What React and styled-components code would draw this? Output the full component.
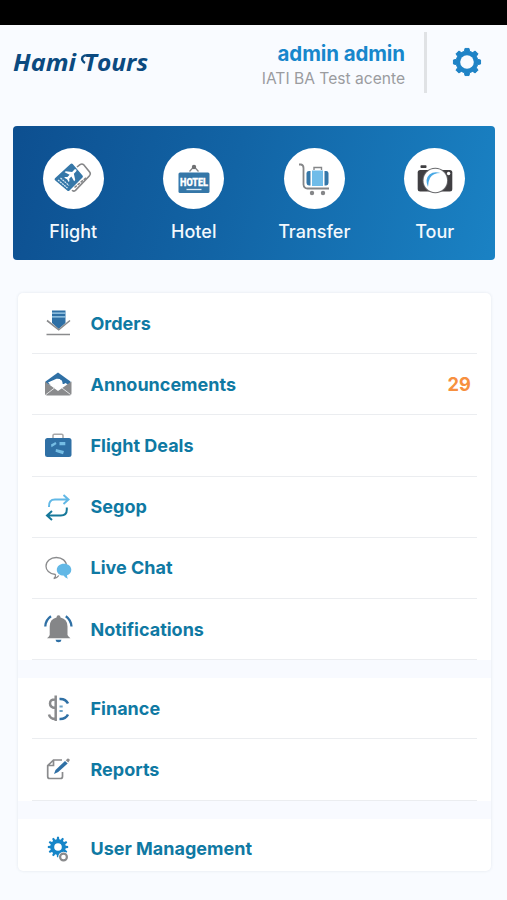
import React from "react";
import styled, { createGlobalStyle } from "styled-components";

const GlobalStyle = createGlobalStyle`
  * {
    box-sizing: border-box;
  }
  body {
    margin: 0;
    background: #f9fbff;
    font-family: Inter, "Liberation Sans", sans-serif;
  }
`;

const Screen = styled.div`
  height: 900px;
  overflow: hidden;
`;

const StatusBar = styled.div`
  height: 25px;
  background: #000;
`;

const Header = styled.header`
  display: flex;
  align-items: center;
  height: 75px;
  padding: 0 25px 0 12px;
`;

const Brand = styled.div`
  flex: 1;
  svg {
    display: block;
    overflow: visible;
  }
  text {
    fill: #0b4a80;
    font-family: "Open Sans", "Noto Sans", sans-serif;
    font-size: 23px;
    font-weight: 700;
    font-style: italic;
  }
`;

const Account = styled.div`
  height: 61px;
  padding: 8px 19px 0 0;
  border-right: 3px solid #e0e2e5;
  text-align: right;
  h1 {
    margin: 0;
    color: #1787cc;
    font-size: 20.5px;
    font-weight: 700;
    line-height: 27px;
    letter-spacing: -0.1px;
  }
  p {
    margin: 0;
    color: #9b9c9f;
    font-size: 15.6px;
    line-height: 23px;
  }
`;

const SettingsButton = styled.button`
  display: flex;
  margin: 0 0 2px 25px;
  padding: 0;
  border: 0;
  background: none;
`;

const Shortcuts = styled.nav`
  display: grid;
  grid-template-columns: repeat(4, 1fr);
  height: 134px;
  margin: 26px 12px 0 13px;
  padding-top: 22px;
  border-radius: 4px;
  background: linear-gradient(105deg, #0d4f90 0%, #1264a5 45%, #1a82c4 100%);
`;

const Shortcut = styled.div`
  display: flex;
  flex-direction: column;
  align-items: center;
  gap: 9px;
  color: #f2f8fd;
  font-size: 18px;
  font-weight: 500;
  line-height: 27px;
`;

const Circle = styled.div`
  display: flex;
  align-items: center;
  justify-content: center;
  width: 61px;
  height: 61px;
  border-radius: 50%;
  background: #fff;
`;

const Menu = styled.main`
  height: 578px;
  margin: 33px 16px 0 18px;
  overflow: hidden;
  border-radius: 5px;
  background: #fff;
  box-shadow: 0 0 3px rgba(60, 80, 110, 0.12);
`;

const Group = styled.section`
  padding: 0 14px;
  & + & {
    border-top: 18px solid #f8faff;
  }
`;

const Row = styled.div`
  display: flex;
  align-items: center;
  height: 61.2px;
  padding: 0 6px 0 11px;
  border-bottom: 1px solid #ebedf0;
  color: #0f79a3;
  font-size: 18px;
  font-weight: 700;
  svg {
    margin-right: 17.5px;
  }
`;

const Label = styled.span`
  flex: 1;
`;

const Count = styled.span`
  color: #f7903f;
  font-size: 18.3px;
`;

const BLUE = "#2f70a5";
const SKY = "#62b8e6";
const GRAY = "#8a8b8d";

// outline of a cog as one closed path
function cogPath(cx, cy, outer, inner, teeth) {
  const step = (Math.PI * 2) / teeth;
  const points = [];
  for (let i = 0; i < teeth; i++) {
    const a = i * step - Math.PI / 2;
    [[-0.3, inner], [-0.19, outer], [0.19, outer], [0.3, inner]].forEach(([t, r]) => {
      points.push(`${(cx + r * Math.cos(a + t * step)).toFixed(2)} ${(cy + r * Math.sin(a + t * step)).toFixed(2)}`);
    });
  }
  return `M${points.join("L")}Z`;
}

const Icon = ({ children }) => (
  <svg width="30" height="30" viewBox="0 0 30 30" fill="none">{children}</svg>
);

const Logo = () => (
  <svg width="138" height="28" viewBox="0 0 138 28" fill="none">
    <text x="1" y="22" textLength="63" lengthAdjust="spacingAndGlyphs">Hami</text>
    <text x="72" y="22" textLength="64" lengthAdjust="spacingAndGlyphs">Tours</text>
    <path d="M82 7Q73 5 70.500 8q-1.500 3.500 2.500 6" stroke="#0b4a80" strokeWidth="2.300" />
  </svg>
);

const SettingsIcon = () => (
  <svg width="30" height="30" viewBox="0 0 30 30">
    <path d={cogPath(15, 15, 13.7, 11, 8)} fill="#1f83c6" stroke="#1f83c6" strokeLinejoin="round" />
    <circle cx="15" cy="15" r="6.800" fill="#f9fbff" />
  </svg>
);

const FlightIcon = () => (
  <svg width="40" height="34" viewBox="0 0 40 34" fill="none">
    <path d="M24 5l3-2.400q2-1.300 3.500 0l6.500 7.900q1 1.800-.5 3.200L22.500 28.300q-2 1.500-3.500 0" stroke="#858688" strokeWidth="1.600" />
    <path d="M21.500 25.500l12-10" stroke="#858688" strokeWidth="1.600" strokeDasharray="3 1" />
    <path d="M17.500 2q1.200-.9 2.200 0l9.800 11.500q.9 1 0 2L16.500 28.500q-1.300 1-2.300 0L2 18.300q-1-1 0-2z" fill="#3577a8" />
    <g transform="translate(18.500 12.500) rotate(43)" fill="#fff">
      <path d="M-1.200-6Q0-8 1.200-6v3.800L6.500 1.500v1.600L1.200 1.500v3.200l1.800 1.500v1.200L0 6.600l-3 .8V6.200l1.800-1.500V1.500l-5.300 1.600V1.500l5.300-3.700z" />
    </g>
    <path d="M5 18l9.500 8M7.500 16l8.500 7.500" stroke="#d9e9f4" strokeWidth="1.200" strokeDasharray="2 .7" />
  </svg>
);

const HotelIcon = () => (
  <svg width="48" height="34" viewBox="-7 0 48 34" fill="none">
    <path d="M12.500 9.500L17 4.500l4.500 5" stroke="#858688" strokeWidth="1.300" />
    <circle cx="17" cy="5" r="2.200" fill="#6f7072" />
    <rect x="1.500" y="10.500" width="31" height="20.500" rx="1.500" fill="#3577a8" />
    <text x="17" y="24.300" textAnchor="middle" textLength="28" lengthAdjust="spacingAndGlyphs" fontFamily="Roboto, sans-serif" fontWeight="900" fontSize="11.500" fill="#fff" stroke="#fff" strokeWidth=".3">HOTEL</text>
    <path d="M9.500 27.500h15" stroke="#d9e9f4" strokeWidth="1.300" />
  </svg>
);

const TransferIcon = () => (
  <svg width="34" height="34" viewBox="0 0 34 34" fill="none">
    <path d="M2 2.500h2Q6.500 3 6.500 6v16.500q.3 3.800 4 4h21.500" stroke="#858688" strokeWidth="1.800" />
    <path d="M17 8V5.500h7.500V8" stroke="#858688" strokeWidth="1.400" />
    <path d="M13.500 9v14.500H12q-2.500-.2-2.500-2.500V11q.2-2 2.500-2zM27.500 9v14.500h1.700q2.300-.2 2.300-2.500V11q-.2-2-2.300-2z" fill="#3577a8" />
    <rect x="15" y="8.500" width="11" height="15.500" fill="#70bce9" />
    <circle cx="15" cy="31" r="2.200" fill="#858688" />
    <circle cx="26" cy="31" r="2.200" fill="#858688" />
  </svg>
);

const TourIcon = () => (
  <svg width="36" height="32" viewBox="0 0 36 32" fill="none">
    <rect x="3.500" y="2.200" width="6" height="2.800" rx=".7" fill="#403f42" />
    <rect x=".7" y="7" width="34.600" height="21.500" rx="2.500" fill="#403f42" />
    <circle cx="31.600" cy="10.500" r="1.700" fill="#fff" />
    <circle cx="18.300" cy="17.500" r="12.700" fill="#68696c" />
    <circle cx="18.300" cy="17.500" r="11.800" fill="#fff" />
    <path d="M11 24Q7.500 16 12.500 11.500 17 7.700 23.500 10q-7.500 0-10.500 5-2 4-2 9z" fill="#49a9e5" />
  </svg>
);

const OrdersIcon = () => (
  <Icon>
    <path d="M9 2.500h13.500V15l-6.800 6L9 15z" fill={BLUE} />
    <path d="M9 5.200h13.500M9 8.800h13.500" stroke="#a9d4ee" strokeWidth="1.200" />
    <path d="M4 12.500l11.700 9.300L27 12.500M3.500 26.500H27" stroke={GRAY} strokeWidth="1.600" />
  </Icon>
);

const AnnouncementsIcon = () => (
  <Icon>
    <path d="M2.500 12.500L15 3.500l12.500 9v3h-25z" fill={BLUE} />
    <path d="M5 13.500l8.500-3.800q6-.5 6.500 5.300l3-1 1.500 2-9 7z" fill="#fff" />
    <path d="M17 9.500q4 .5 3.500 5.500" stroke={BLUE} strokeWidth="1.600" />
    <path d="M2 12.500l13 9.500 13.500-9.500v12q0 2-2 2H4q-2 0-2-2z" fill={GRAY} />
    <path d="M3 25.500l8.500-6.500M27.500 25.500L19 19" stroke="#e2e3e4" />
  </Icon>
);

const DealsIcon = () => (
  <Icon>
    <path d="M10 8V5.500q0-1.300 1.300-1.300h7.400q1.300 0 1.300 1.300V8" stroke="#a8a8a9" strokeWidth="1.500" />
    <rect x="2" y="8" width="26.500" height="19" rx="2.500" fill={BLUE} />
    <path d="M8 14.500l4.500-2.500 1 2-5 3.200zM16.500 12h5.800v3.300h-5.800zM13 19l8 2-1 3.200-7.500-2.500z" fill="#75bde4" />
  </Icon>
);

const SegopIcon = () => (
  <Icon>
    <path d="M6 15q-.5-7.500 6-7.500h13M20.500 3l5 4.500-5 4.500" stroke={SKY} strokeWidth="2" />
    <path d="M23.800 15.500v2q0 6-6 6H4.500M9 19l-5 4.500L9 28" stroke="#16789a" strokeWidth="2" />
  </Icon>
);

const ChatIcon = () => (
  <Icon>
    <path d="M12.500 21.500C6 21 3 17 3 13.200 3 8 7.500 4.500 13.300 4.500S23.500 8 23.500 13M12.500 21.500q.5 2.500-1.700 4 3.500-.5 5-3" stroke={GRAY} strokeWidth="1.300" />
    <path d="M21 10.700c4.300 0 7.300 2.600 7.300 6 0 2.700-1.800 4.800-4.300 5.500q0 2 1 3.500-3-.7-4.500-3.100c-4-.1-6.700-2.600-6.700-5.900 0-3.400 3.100-6 7.200-6z" fill={SKY} />
  </Icon>
);

const NotificationsIcon = () => (
  <Icon>
    <path d="M2.300 12.500Q2.500 6 8 2.300M28.500 12.500Q28 6 22.800 2.300" stroke={BLUE} strokeWidth="2.300" />
    <path d="M13.500 3.500q0-2.200 2-2.200t2 2.200q7 1.500 7 9V21q1 2 3 3.300H4q2-1.300 2.700-3.300v-8.500q0-7.500 6.800-9z" fill="#858688" />
    <path d="M12.500 25.700h6q-.3 2.500-3 2.500t-3-2.500z" fill={BLUE} />
  </Icon>
);

const FinanceIcon = () => (
  <Icon>
    <path d="M12.700 2.500v25.500M12.500 6.500Q7 6 7 10.500q0 4 5.500 4.500M6 21.500q1 4.500 6.500 4.500" stroke={GRAY} strokeWidth="2.500" />
    <path d="M16.500 6q6-.5 8.500 4.500M16.500 26q6 .3 8.500-4.500" stroke={BLUE} strokeWidth="2.600" />
    <path d="M16.500 13.500h3.200M16.500 18h3.200" stroke="#6ea3c5" strokeWidth="2" />
  </Icon>
);

const ReportsIcon = () => (
  <Icon>
    <path d="M19 6h-8.500l-5.800 5.700V22.500q0 2 2 2H17.500q2 0 2-2v-4.500M10.500 6v5.500H5" stroke={GRAY} strokeWidth="1.700" />
    <path d="M11 20l1.500-4L22 7l2.700 2.500-9.500 8.500z" fill={BLUE} />
    <path d="M22.700 6.200l2-1.800q1.700-.2 2.200 1.600L25.300 8.500z" fill={GRAY} />
  </Icon>
);

const UsersIcon = () => (
  <Icon>
    <path d={cogPath(15, 13, 10.2, 7.800, 12)} fill="#1685c8" />
    <circle cx="15" cy="13" r="3.800" fill="#fff" />
    <circle cx="20.500" cy="23" r="5.300" fill="#fff" />
    <circle cx="20.500" cy="23" r="3.400" stroke={GRAY} strokeWidth="2.200" />
  </Icon>
);

const shortcuts = [
  { title: "Flight", icon: <FlightIcon /> },
  { title: "Hotel", icon: <HotelIcon /> },
  { title: "Transfer", icon: <TransferIcon /> },
  { title: "Tour", icon: <TourIcon /> },
];

const groups = [
  [
    { title: "Orders", icon: <OrdersIcon /> },
    { title: "Announcements", icon: <AnnouncementsIcon />, count: 29 },
    { title: "Flight Deals", icon: <DealsIcon /> },
    { title: "Segop", icon: <SegopIcon /> },
    { title: "Live Chat", icon: <ChatIcon /> },
    { title: "Notifications", icon: <NotificationsIcon /> },
  ],
  [
    { title: "Finance", icon: <FinanceIcon /> },
    { title: "Reports", icon: <ReportsIcon /> },
  ],
  [{ title: "User Management", icon: <UsersIcon /> }],
];

export default function App() {
  return (
    <Screen>
      <GlobalStyle />
      <StatusBar />
      <Header>
        <Brand>
          <Logo />
        </Brand>
        <Account>
          <h1>admin admin</h1>
          <p>IATI BA Test acente</p>
        </Account>
        <SettingsButton aria-label="Settings">
          <SettingsIcon />
        </SettingsButton>
      </Header>
      <Shortcuts>
        {shortcuts.map((item) => (
          <Shortcut key={item.title}>
            <Circle>{item.icon}</Circle>
            {item.title}
          </Shortcut>
        ))}
      </Shortcuts>
      <Menu>
        {groups.map((rows) => (
          <Group key={rows[0].title}>
            {rows.map((row) => (
              <Row key={row.title}>
                {row.icon}
                <Label>{row.title}</Label>
                {row.count && <Count>{row.count}</Count>}
              </Row>
            ))}
          </Group>
        ))}
      </Menu>
    </Screen>
  );
}
